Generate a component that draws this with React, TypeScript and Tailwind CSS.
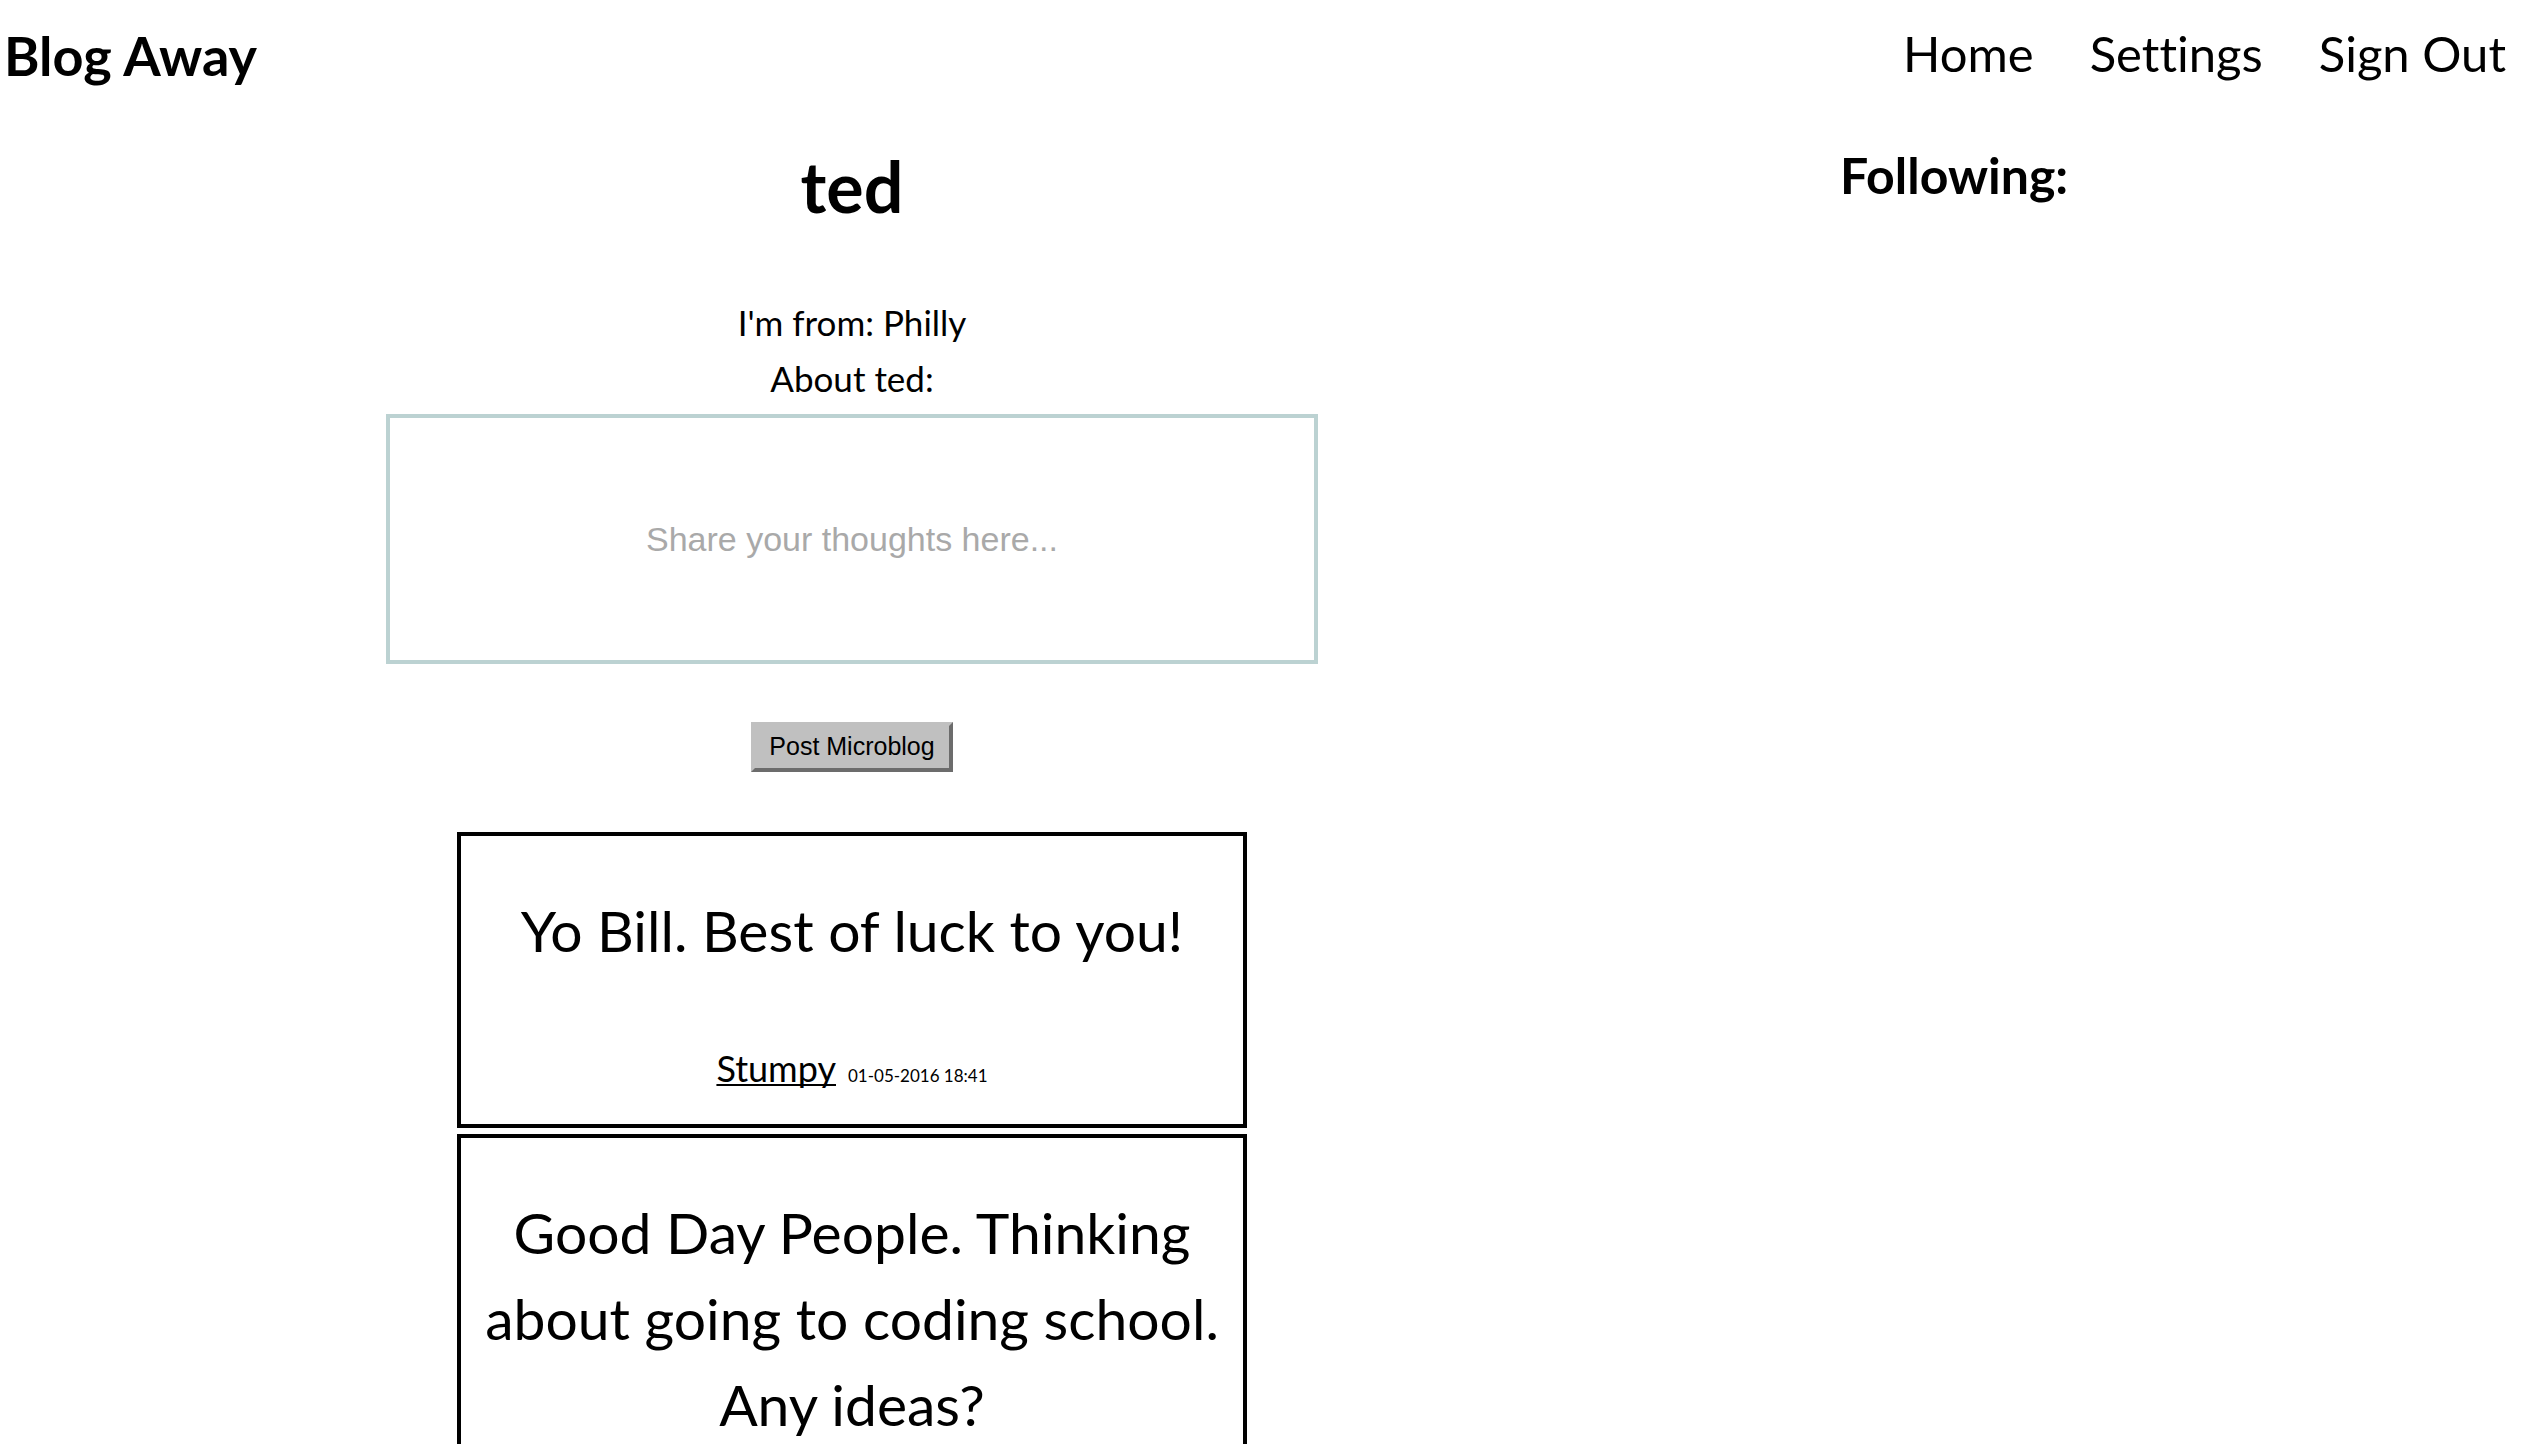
type Post = { text: string; author?: string; date?: string };

const links = ['Home', 'Settings', 'Sign Out'];

const posts: Post[] = [
  { text: 'Yo Bill. Best of luck to you!', author: 'Stumpy', date: '01-05-2016 18:41' },
  { text: 'Good Day People. Thinking about going to coding school. Any ideas?' },
];

function Header() {
  return (
    <header className="flex items-start justify-between pr-6 pl-1">
      <h1 className="text-[54px] leading-[112px] font-bold">Blog Away</h1>
      <nav className="flex gap-14 text-[49px] leading-[106px]">
        {links.map((label) => (
          <a key={label} href="#">
            {label}
          </a>
        ))}
      </nav>
    </header>
  );
}

function PostCard({ text, author, date }: Post) {
  return (
    <article className="border-4 border-black px-2 pt-[51px] pb-[26px] text-center">
      <p className="text-[57px] leading-[86px]">{text}</p>
      {author && (
        <footer className="mt-[73px] flex items-baseline justify-center gap-3 leading-[44px]">
          <a href="#" className="text-[36px] underline decoration-2 underline-offset-2 [text-decoration-skip-ink:none]">
            {author}
          </a>
          <time className="text-[17px]">{date}</time>
        </footer>
      )}
    </article>
  );
}

export default function App() {
  return (
    <div className="min-h-screen bg-white font-['Papyrus','Lato',sans-serif] text-black [font-variant-ligatures:none]">
      <Header />
      <div className="grid grid-cols-[1704fr_826fr] pt-8">
        <main className="flex flex-col items-center px-4">
          <h2 className="text-[70px] leading-[84px] font-bold">ted</h2>
          <div className="mt-[66px] text-center text-[35px] leading-[56px]">
            <p>I'm from: Philly</p>
            <p>About ted:</p>
          </div>
          <form className="mt-2 flex w-full flex-col items-center" onSubmit={(e) => e.preventDefault()}>
            <input
              type="text"
              aria-label="Share your thoughts"
              placeholder="Share your thoughts here..."
              className="h-[250px] w-full max-w-[932px] border-4 border-[#bcd2d2] text-center font-['Liberation_Sans',sans-serif] text-[34px] outline-none placeholder:text-[#a9a9a9]"
            />
            <button
              type="submit"
              className="mt-[58px] h-[50px] border-4 border-t-[#c0c0c0] border-r-[#6c6c6c] border-b-[#6c6c6c] border-l-[#c0c0c0] bg-[#c0c0c0] px-[14px] pb-[2px] font-['Liberation_Sans',sans-serif] text-[25px] leading-[40px]"
            >
              Post Microblog
            </button>
          </form>
          <section className="mt-[60px] flex w-full max-w-[790px] flex-col gap-[6px]">
            {posts.map((post) => (
              <PostCard key={post.text} {...post} />
            ))}
          </section>
        </main>
        <aside className="pl-[136px]">
          <h3 className="text-[50px] leading-[62px] font-bold">Following:</h3>
        </aside>
      </div>
    </div>
  );
}
